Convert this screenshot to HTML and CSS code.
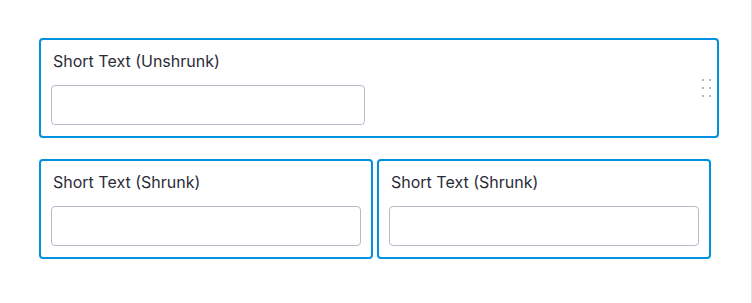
FILE: index.html
```html
<!DOCTYPE html>
<html lang="en">
<head>
  <meta charset="utf-8">
  <title>Short text fields</title>
  <link rel="stylesheet" href="styles.css">
</head>
<body>
  <div class="canvas">
    <!-- Full width row -->
    <div class="field field-wide">
      <label class="field-label" for="unshrunk">Short Text (Unshrunk)</label>
      <input class="field-input input-fixed" id="unshrunk" type="text">
      <svg class="drag-handle" width="10" height="18" viewBox="0 0 10 18" aria-hidden="true">
        <rect x="0" y="0" width="2" height="2"/>
        <rect x="7" y="0" width="2" height="2"/>
        <rect x="0" y="8" width="2" height="2"/>
        <rect x="7" y="8" width="2" height="2"/>
        <rect x="0" y="16" width="2" height="2"/>
        <rect x="7" y="16" width="2" height="2"/>
      </svg>
    </div>

    <!-- Two column row -->
    <div class="field-row">
      <div class="field">
        <label class="field-label" for="shrunk-a">Short Text (Shrunk)</label>
        <input class="field-input" id="shrunk-a" type="text">
      </div>
      <div class="field">
        <label class="field-label" for="shrunk-b">Short Text (Shrunk)</label>
        <input class="field-input" id="shrunk-b" type="text">
      </div>
    </div>
  </div>
</body>
</html>
```

FILE: styles.css
```css
html {
  height: 100%;
}

body {
  margin: 0;
  height: 100%;
  background-color: #fff;
  font-family: Inter, 'Noto Sans', sans-serif;
  font-size: 16px;
  line-height: 20px;
  color: #2c2c38;
  -webkit-font-smoothing: antialiased;
}

.canvas {
  box-sizing: border-box;
  width: 752px;
  height: 303px;
  padding: 38px 0 0 39px;
  border-right: 1px solid #e4e4ef;
  display: flex;
  flex-direction: column;
  gap: 21px;
}

.field {
  position: relative;
  box-sizing: border-box;
  height: 100px;
  padding: 11px 10px;
  border: 2px solid #0092df;
  border-radius: 4px;
  background-color: #fff;
  display: flex;
  flex-direction: column;
}

.field-wide {
  width: 680px;
}

.field-row {
  display: flex;
  gap: 4px;
}

.field-row .field {
  width: 334px;
}

.field-label {
  display: block;
  margin: 0 0 14px 2px;
}

.field-input {
  box-sizing: border-box;
  width: 100%;
  height: 40px;
  margin: 0;
  padding: 0 10px;
  border: 1px solid #b9b9c9;
  border-radius: 4px;
  background-color: #fff;
  font: inherit;
  outline: none;
}

.input-fixed {
  width: 314px;
}

/* sits over the card edge, vertically centred */
.drag-handle {
  position: absolute;
  right: 5px;
  top: 39px;
  fill: #b3b6ca;
}
```
